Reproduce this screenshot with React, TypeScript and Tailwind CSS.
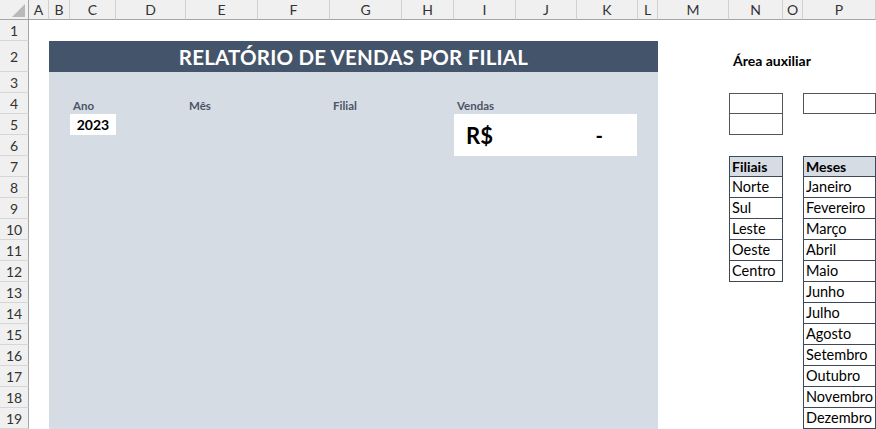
import React from "react";

const COLUNAS = ["A", "B", "C", "D", "E", "F", "G", "H", "I", "J", "K", "L", "M", "N", "O", "P"];
const LINHAS = Array.from({ length: 19 }, (_, i) => i + 1);
const FILIAIS = ["Norte", "Sul", "Leste", "Oeste", "Centro"];
const MESES = ["Janeiro", "Fevereiro", "Março", "Abril", "Maio", "Junho", "Julho", "Agosto", "Setembro", "Outubro", "Novembro", "Dezembro"];

// classes escritas por extenso para o Tailwind gerar; índice = número da linha/coluna da grade
const ROW_START = [
  "", "row-start-1", "row-start-2", "row-start-3", "row-start-4", "row-start-5", "row-start-6", "row-start-7",
  "row-start-8", "row-start-9", "row-start-10", "row-start-11", "row-start-12", "row-start-13",
  "row-start-14", "row-start-15", "row-start-16", "row-start-17", "row-start-18", "row-start-19", "row-start-20",
];
const COL_START = [
  "", "col-start-1", "col-start-2", "col-start-3", "col-start-4", "col-start-5", "col-start-6", "col-start-7",
  "col-start-8", "col-start-9", "col-start-10", "col-start-11", "col-start-12", "col-start-13",
  "col-start-14", "col-start-15", "col-start-16", "col-start-17",
];

// linha da planilha n -> linha n+1 da grade (a 1ª é o cabeçalho)
const linha = (n: number) => ROW_START[n + 1];

export default function App() {
  return (
    <div
      className="grid h-[429px] w-[876px] overflow-hidden bg-white text-[#222] grid-cols-[29px_20px_21px_46px_70px_72px_72px_72px_52px_62px_61px_61px_20px_71px_54px_20px_73px] grid-rows-[20px_21px_31px_repeat(17,21px)]"
      style={{ fontFamily: "Lato, 'Open Sans', sans-serif" }}
    >
      {/* Canto */}
      <div className="col-start-1 row-start-1 relative border-b border-r border-[#a5a5a5] bg-[#f0f0f0]">
        <svg className="absolute left-[12px] top-[4px]" width="14" height="13" viewBox="0 0 14 13">
          <polygon points="13,0 13,13 0,13" fill="#b9b9b9" />
        </svg>
      </div>

      {/* Cabeçalho de colunas */}
      {COLUNAS.map((c, i) => (
        <div
          key={c}
          className={`${COL_START[i + 2]} row-start-1 flex items-center justify-center border-b border-r border-b-[#a5a5a5] border-r-[#d0d0d0] bg-[#f0f0f0] text-[14px] text-[#333]`}
        >
          {c}
        </div>
      ))}

      {/* Cabeçalho de linhas */}
      {LINHAS.map((n) => (
        <div
          key={n}
          className={`col-start-1 ${linha(n)} flex items-center justify-center border-b border-r border-b-[#d6d6d6] border-r-[#a5a5a5] bg-[#f0f0f0] text-[14px] text-[#333]`}
        >
          {n}
        </div>
      ))}

      {/* Título */}
      <div className="col-start-3 col-span-11 row-start-3 flex items-center justify-center bg-[#44546a] pt-px text-[20.5px] font-bold tracking-[0.2px] text-white">
        RELATÓRIO DE VENDAS POR FILIAL
      </div>

      {/* Painel */}
      <div className="col-start-3 col-span-11 row-start-4 row-end-21 bg-[#d6dce4]" />

      <div className="col-start-4 row-start-5 flex items-end pl-[3px] text-[11.5px] font-bold text-[#4b5566]">Ano</div>
      <div className="col-start-6 row-start-5 flex items-end pl-[3px] text-[11.5px] font-bold text-[#4b5566]">Mês</div>
      <div className="col-start-8 row-start-5 flex items-end pl-[3px] text-[11.5px] font-bold text-[#4b5566]">Filial</div>
      <div className="col-start-10 row-start-5 flex items-end pl-[3px] text-[11.5px] font-bold text-[#4b5566]">Vendas</div>

      <div className="col-start-4 row-start-6 flex items-center justify-center bg-white text-[14px] font-bold text-black">2023</div>

      <div className="col-start-10 col-span-3 row-start-6 row-span-2 mr-px flex items-center justify-between bg-white pl-[12px] pr-[34px] text-black">
        <span className="text-[22px] font-bold">R$</span>
        <span className="text-[20px] font-bold">-</span>
      </div>

      {/* Área auxiliar */}
      <div className="col-start-15 row-start-3 flex items-end whitespace-nowrap pb-px pl-[4px] text-[14px] font-bold text-black">
        Área auxiliar
      </div>
      <div className="col-start-15 row-start-5 border border-[#555]" />
      <div className="col-start-15 row-start-6 border-x border-b border-[#555]" />
      <div className="col-start-17 row-start-5 border border-[#555]" />

      {/* Filiais */}
      <div className="col-start-15 row-start-8 flex items-center border border-[#3e4857] bg-[#d6dce4] pl-[2px] text-[14px] font-bold text-black">
        Filiais
      </div>
      {FILIAIS.map((f, i) => (
        <div
          key={f}
          className={`${COL_START[15]} ${linha(8 + i)} flex items-center border-x border-b border-[#3e4857] pl-[2px] text-[14.5px] text-black`}
        >
          {f}
        </div>
      ))}

      {/* Meses */}
      <div className="col-start-17 row-start-8 flex items-center border border-[#3e4857] bg-[#d6dce4] pl-[2px] text-[14px] font-bold text-black">
        Meses
      </div>
      {MESES.map((m, i) => (
        <div
          key={m}
          className={`${COL_START[17]} ${linha(8 + i)} flex items-center border-x border-b border-[#3e4857] pl-[2px] text-[14.5px] text-black`}
        >
          {m}
        </div>
      ))}
    </div>
  );
}
